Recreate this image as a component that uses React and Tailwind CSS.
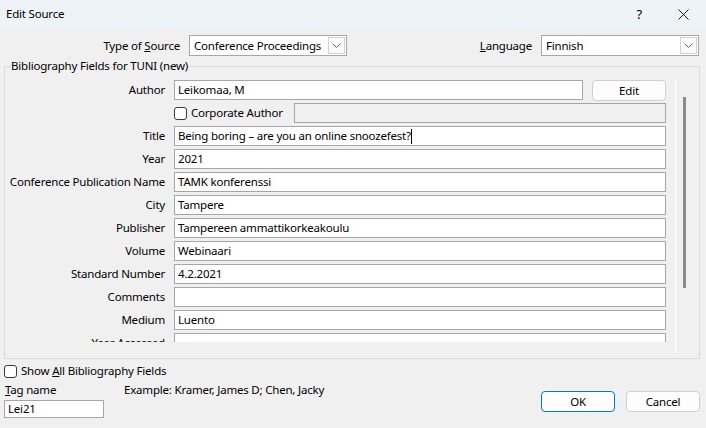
import React from "react";

const fields = [
  ["Title", "Being boring – are you an online snoozefest?", true],
  ["Year", "2021"],
  ["Conference Publication Name", "TAMK konferenssi"],
  ["City", "Tampere"],
  ["Publisher", "Tampereen ammattikorkeakoulu"],
  ["Volume", "Webinaari"],
  ["Standard Number", "4.2.2021"],
  ["Comments", ""],
  ["Medium", "Luento"],
  ["Year Accessed", ""],
];

function Chevron() {
  return (
    <svg width="9" height="5" viewBox="0 0 9 5" fill="none" stroke="#606060" strokeWidth="1">
      <path d="M0.5 0.5 L4.5 4.5 L8.5 0.5" />
    </svg>
  );
}

function Select({ value }) {
  return (
    <div className="w-[158px] h-[21px] bg-white border border-[#a6a6a6] flex items-center">
      <span className="pl-[4px] flex-1 whitespace-nowrap overflow-hidden">{value}</span>
      <div className="w-[17px] h-[17px] shrink-0 mr-[1px] border border-[#d0d0d0] bg-[#fafafa] flex items-center justify-center">
        <Chevron />
      </div>
    </div>
  );
}

function Checkbox() {
  return <div className="w-[13px] h-[13px] shrink-0 rounded-[3px] border border-[#3a3a3a] bg-white" />;
}

function Button({ children, primary }) {
  return (
    <div
      className={
        "w-[74px] h-[21px] rounded-[4px] bg-[#fdfdfd] flex items-center justify-center border " +
        (primary ? "border-[#0078d4]" : "border-[#d0d0d0]")
      }
    >
      {children}
    </div>
  );
}

function Row({ label, children }) {
  return (
    <div className="flex items-center h-[20px] shrink-0">
      <div className="w-[160px] text-right whitespace-nowrap">{label}</div>
      <div className="ml-[9px] flex items-center">{children}</div>
    </div>
  );
}

export default function App() {
  return (
    <div className="w-[706px] h-[428px] bg-[#f0f0f0] text-[11.5px] tracking-[-0.2px] leading-[16px] text-black overflow-hidden font-['Noto_Sans',sans-serif]">
      {/* title bar */}
      <div className="h-[28px] bg-[#eef3f8] flex items-center pl-[6px]">
        <span>Edit Source</span>
        <span className="ml-auto text-[13px]">?</span>
        <svg className="ml-[36px] mr-[17px]" width="11" height="11" viewBox="0 0 11 11" stroke="#1a1a1a" strokeWidth="1">
          <path d="M0.5 0.5 L10.5 10.5 M10.5 0.5 L0.5 10.5" />
        </svg>
      </div>

      {/* type / language */}
      <div className="flex items-center mt-[7px] h-[21px]">
        <div className="w-[180px] text-right">
          Type of <u>S</u>ource
        </div>
        <div className="ml-[9px]">
          <Select value="Conference Proceedings" />
        </div>
        <div className="ml-auto">
          <u>L</u>anguage
        </div>
        <div className="ml-[9px] mr-[7px]">
          <Select value="Finnish" />
        </div>
      </div>

      {/* group box */}
      <fieldset className="ml-[4px] mr-[6px] mt-[2px] border border-[#dcdcdc] pb-[5px]">
        <legend className="ml-[6px] leading-[16px]">Bibliography Fields for TUNI (new)</legend>
        <div className="flex items-start mt-[6px]">
          <div className="h-[262px] overflow-hidden flex flex-col gap-[3px]">
            <Row label="Author">
              <div className="w-[409px] h-[20px] bg-white border border-[#a6a6a6] pl-[3px] flex items-center">Leikomaa, M</div>
              <div className="ml-[9px] h-[20px] flex items-start">
                <Button>Edit</Button>
              </div>
            </Row>
            <div className="flex items-center h-[20px] shrink-0">
              <div className="w-[160px]" />
              <div className="ml-[9px] flex items-center w-[492px]">
                <Checkbox />
                <span className="ml-[4px]">Corporate Author</span>
                <div className="ml-auto w-[372px] h-[20px] bg-[#f0f0f0] border border-[#a6a6a6]" />
              </div>
            </div>
            {fields.map(([label, value, cursor]) => (
              <Row key={label} label={label}>
                <div className="w-[492px] h-[20px] bg-white border border-[#a6a6a6] pl-[3px] flex items-center whitespace-nowrap">
                  {value}
                  {cursor && <span className="w-px h-[15px] bg-black" />}
                </div>
              </Row>
            ))}
          </div>
          <div className="ml-[9px] flex-1 h-[273px] border-l border-white pt-[17px] pl-[7px]">
            <div className="w-[3px] h-[191px] bg-[#8a8a8a]" />
          </div>
        </div>
      </fieldset>

      {/* bottom */}
      <div className="flex items-end ml-[4px] mr-[6px]">
        <div className="flex flex-col">
          <div className="flex items-center h-[16px] mt-[4px]">
            <Checkbox />
            <span className="ml-[4px]">
              Show <u>A</u>ll Bibliography Fields
            </span>
          </div>
          <div className="flex items-center h-[16px] mt-[3px] pl-[1px]">
            <span className="w-[119px]">
              <u>T</u>ag name
            </span>
            <span>Example: Kramer, James D; Chen, Jacky</span>
          </div>
          <div className="mt-[2px] w-[100px] h-[18px] bg-white border border-[#a6a6a6] pl-[3px] flex items-center">Lei21</div>
        </div>
        <div className="ml-auto flex gap-[11px] mb-[6px]">
          <Button primary>OK</Button>
          <Button>Cancel</Button>
        </div>
      </div>
    </div>
  );
}
